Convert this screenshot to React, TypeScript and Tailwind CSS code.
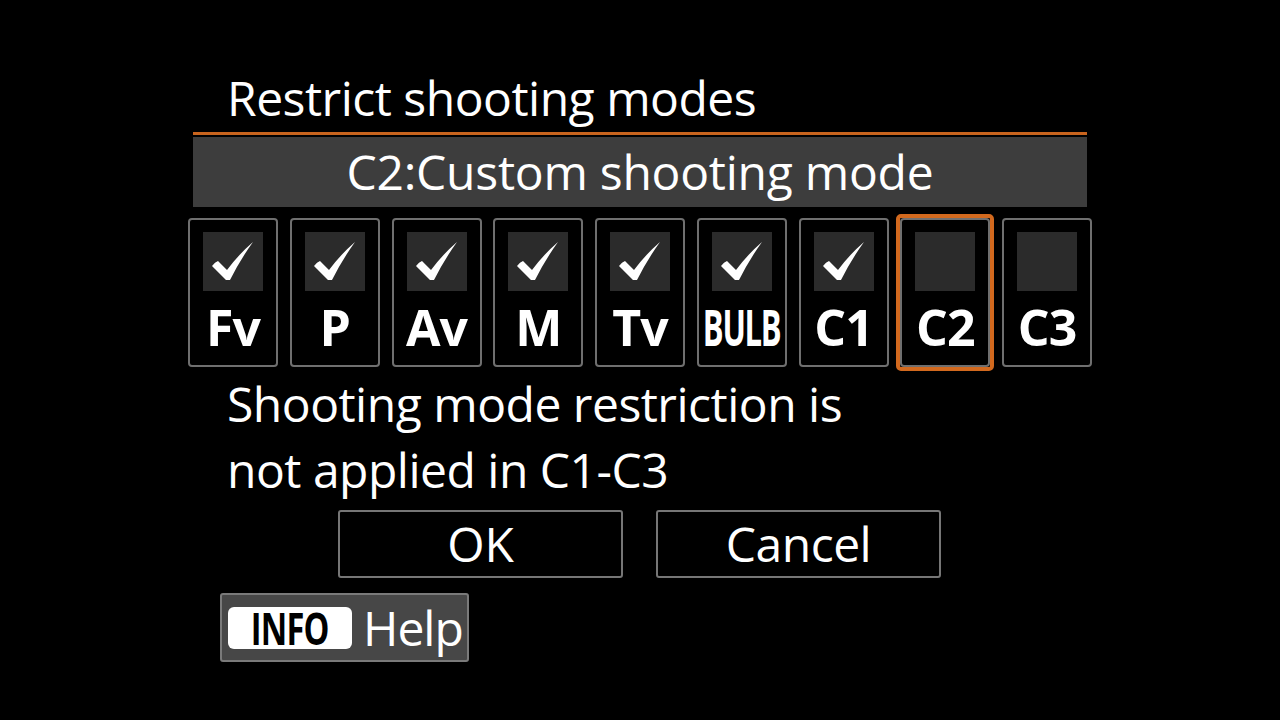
import React from 'react';

type Mode = { label: string; checked: boolean; narrow?: boolean };

const modes: Mode[] = [
  { label: 'Fv', checked: true },
  { label: 'P', checked: true },
  { label: 'Av', checked: true },
  { label: 'M', checked: true },
  { label: 'Tv', checked: true },
  { label: 'BULB', checked: true, narrow: true },
  { label: 'C1', checked: true },
  { label: 'C2', checked: false },
  { label: 'C3', checked: false },
];

const selected = 'C2';

const CheckMark = () => (
  <svg viewBox="0 0 60 59" className="w-full h-full">
    <path
      d="M9 34 Q12 30 15 29 L24 38 Q36 22 50 10 Q37 28 27 48 L23 48 Z"
      fill="#ffffff"
    />
  </svg>
);

const ModeBox = ({ mode }: { mode: Mode }) => (
  <div className="relative w-[90px] h-[149px] rounded-[4px] border-2 border-[#6f6f6f] flex flex-col items-center">
    <div className="mt-[12px] w-[60px] h-[59px] bg-[#2b2b2b]">
      {mode.checked && <CheckMark />}
    </div>
    <div
      className={
        mode.narrow
          ? 'mt-[8px] text-[50px] leading-[56px] font-bold tracking-[-2px] scale-x-[0.62] whitespace-nowrap'
          : 'mt-[8px] text-[50px] leading-[56px] font-bold tracking-[-1px]'
      }
    >
      {mode.label}
    </div>
    {mode.label === selected && (
      <div className="absolute -inset-[6px] rounded-[5px] border-4 border-[#d2691e]" />
    )}
  </div>
);

export default function App() {
  return (
    <div
      className="w-[1280px] h-[720px] bg-black text-white overflow-hidden"
      style={{ fontFamily: '"Open Sans", "Noto Sans", sans-serif' }}
    >
      <div className="ml-[188px] w-[904px] pt-[70px] flex flex-col">
        <div className="pl-[39px] text-[48px] leading-[56px] tracking-[-0.5px]">Restrict shooting modes</div>
        <div className="mx-[5px] mt-[6px] h-[3px] bg-[#c8641e]" />
        <div className="mx-[5px] mt-[2px] h-[70px] bg-[#3d3d3d] flex items-center justify-center text-[48px] leading-[70px] tracking-[-0.25px]">
          C2:Custom shooting mode
        </div>
        <div className="mt-[11px] flex gap-[11.75px]">
          {modes.map((m) => (
            <ModeBox key={m.label} mode={m} />
          ))}
        </div>
        <div className="pl-[39px] mt-[4px] text-[48px] leading-[66px] tracking-[-0.5px]">
          <div>Shooting mode restriction is</div>
          <div>not applied in C1-C3</div>
        </div>
        <div className="mt-[7px] flex gap-[33px] pl-[150px]">
          <div className="w-[285px] h-[68px] rounded-[3px] border-2 border-[#767676] flex items-center justify-center text-[48px] leading-[66px]">
            OK
          </div>
          <div className="w-[285px] h-[68px] rounded-[3px] border-2 border-[#767676] flex items-center justify-center text-[48px] leading-[66px] tracking-[-0.5px]">
            Cancel
          </div>
        </div>
        <div className="mt-[15px] ml-[32px] w-[249px] h-[69px] rounded-[3px] border-2 border-[#7a7a7a] bg-[#474747] flex items-center px-[6px] gap-[11px]">
          <div className="w-[124px] h-[42px] shrink-0 rounded-[6px] bg-white text-black flex items-center justify-center">
            <span className="text-[44px] leading-[42px] font-bold scale-x-[0.74] tracking-[-1px] whitespace-nowrap">INFO</span>
          </div>
          <span className="text-[48px] leading-[60px] tracking-[-1px]">Help</span>
        </div>
      </div>
    </div>
  );
}
